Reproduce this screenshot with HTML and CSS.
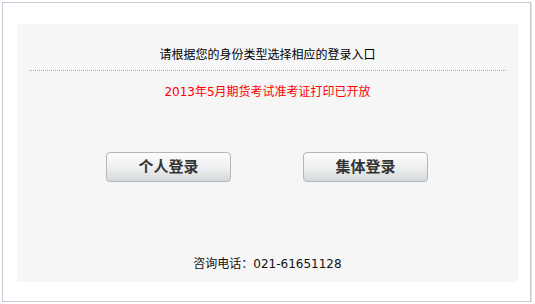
FILE: index.html
```html
<!DOCTYPE html>
<html lang="zh-CN">
<head>
<meta charset="utf-8">
<title>登录入口</title>
<link rel="stylesheet" href="styles.css">
</head>
<body>
<div class="frame">
  <div class="panel">
    <div class="title">请根据您的身份类型选择相应的登录入口</div>
    <div class="notice">2013年5月期货考试准考证打印已开放</div>
    <div class="buttons">
      <a class="btn" href="#">个人登录</a>
      <a class="btn" href="#">集体登录</a>
    </div>
    <div class="contact">咨询电话：021-61651128</div>
  </div>
</div>
</body>
</html>
```
FILE: styles.css
```css
html, body {
  margin: 0;
  padding: 0;
  background: #ffffff;
}
body {
  font-family: "DejaVu Sans", "Noto Sans CJK SC", sans-serif;
  font-size: 12px;
  color: #000;
}
.frame {
  box-sizing: border-box;
  margin: 2px 0 0 2px;
  width: 529px;
  height: 300px;
  border: 1px solid #c9c8d4;
  box-shadow: 1px 1px 0 #e2e2e6;
  background: #fff;
  padding: 21px 0 0 14px;
}
.panel {
  box-sizing: border-box;
  width: 501px;
  height: 258px;
  background: #f6f6f6;
  padding: 21px 0 8px 0;
  display: flex;
  flex-direction: column;
}
.title {
  margin: 0 12px;
  line-height: 20px;
  padding-bottom: 5px;
  border-bottom: 1px dotted #aaaaaa;
  text-align: center;
}
.notice {
  margin-top: 11px;
  line-height: 20px;
  text-align: center;
  color: #ff0000;
}
.buttons {
  margin-top: 50px;
  display: flex;
  justify-content: center;
  gap: 72px;
  padding-right: 1px;
}
.btn {
  box-sizing: border-box;
  width: 125px;
  height: 30px;
  border: 1px solid #b2b7bb;
  border-radius: 4px;
  background: linear-gradient(to bottom, #fcfcfc 0%, #eef0f1 50%, #d6d9dc 100%);
  color: #333;
  font-weight: bold;
  font-size: 15px;
  line-height: 28px;
  text-align: center;
  text-decoration: none;
  letter-spacing: 0;
}
.contact {
  margin-top: 72px;
  line-height: 20px;
  text-align: center;
  color: #111;
}
```
